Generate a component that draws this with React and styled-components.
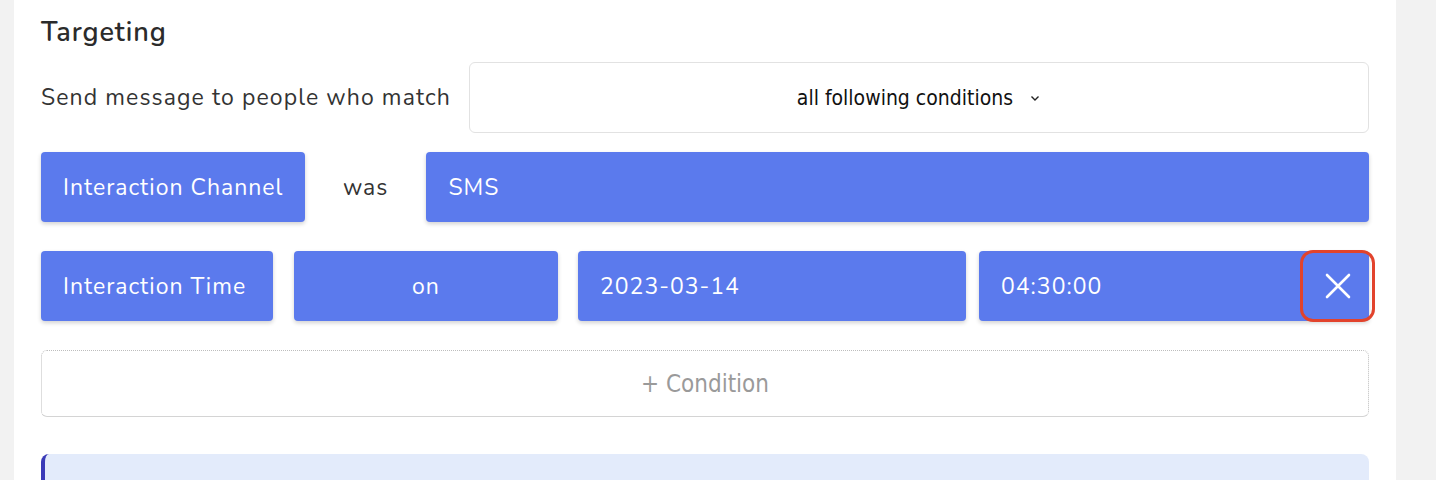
import React from "react";
import styled, { createGlobalStyle } from "styled-components";

const GlobalStyle = createGlobalStyle`
  html, body {
    margin: 0;
    padding: 0;
    background: #f2f2f2;
    font-family: "Nunito", "Noto Sans", "Open Sans", sans-serif;
  }
`;

const Page = styled.div`
  display: flex;
  height: 480px;
  overflow: hidden;
  padding-left: 14px;
  padding-right: 40px;
`;

const Panel = styled.div`
  flex: 1;
  background: #ffffff;
  padding: 15px 27px 0 27px;
  display: flex;
  flex-direction: column;

  & > * {
    flex-shrink: 0;
  }
`;

const Title = styled.h2`
  margin: 0 0 11px 0;
  font-size: 27px;
  font-weight: 600;
  letter-spacing: 0.9px;
  color: #2b2b2b;
  line-height: 36px;
`;

const MatchRow = styled.div`
  display: flex;
  align-items: center;
  gap: 18px;
  margin-bottom: 19px;
`;

const Label = styled.span`
  font-size: 23px;
  letter-spacing: 1.1px;
  color: #333333;
  white-space: nowrap;
`;

const Select = styled.div`
  flex: 1;
  height: 71px;
  border: 1px solid #e2e2e2;
  border-radius: 6px;
  box-sizing: border-box;
  display: flex;
  align-items: center;
  justify-content: center;
  gap: 16px;
  font-family: "DejaVu Sans Condensed", "DejaVu Sans", sans-serif;
  font-size: 21px;
  color: #111111;
`;

const Row = styled.div`
  display: flex;
  align-items: center;
  margin-bottom: 29px;
`;

const Chip = styled.div`
  height: 70px;
  box-sizing: border-box;
  background: #5b7aed;
  color: #ffffff;
  border-radius: 4px;
  box-shadow: 0 2px 4px rgba(0, 0, 0, 0.18);
  display: flex;
  align-items: center;
  justify-content: ${(p) => (p.$center ? "center" : "flex-start")};
  padding: ${(p) => (p.$center ? "0" : "0 0 0 22px")};
  font-size: 23px;
  letter-spacing: 1px;
  white-space: nowrap;
  width: ${(p) => (p.$w ? `${p.$w}px` : "auto")};
  flex: ${(p) => (p.$grow ? 1 : "none")};
  margin-right: ${(p) => p.$mr || 0}px;
  position: relative;
`;

const Word = styled.span`
  font-size: 23px;
  letter-spacing: 1px;
  color: #333333;
  margin: 0 38px;
`;

const RemoveButton = styled.button`
  position: absolute;
  right: -6px;
  top: -1px;
  width: 75px;
  height: 72px;
  box-sizing: border-box;
  border: 3px solid #e2432c;
  border-radius: 13px;
  background: transparent;
  display: flex;
  align-items: center;
  justify-content: center;
  padding: 0;
  cursor: pointer;
`;

const AddCondition = styled.button`
  height: 67px;
  box-sizing: border-box;
  border: 1px dotted #bdbdbd;
  border-bottom: 1.5px solid #d4d4d4;
  border-radius: 6px;
  background: #ffffff;
  font-family: "DejaVu Sans Condensed", "DejaVu Sans", sans-serif;
  font-weight: 300;
  font-size: 24px;
  color: #9a9a9a;
  margin-bottom: 37px;
  cursor: pointer;
`;

const Note = styled.div`
  height: 60px;
  background: #e3ebfb;
  border-left: 4px solid #3a3ab8;
  border-radius: 8px 8px 0 0;
`;

export default function App() {
  return (
    <>
      <GlobalStyle />
      <Page>
        <Panel>
          <Title>Targeting</Title>
          <MatchRow>
            <Label>Send message to people who match</Label>
            <Select>
              <span>all following conditions</span>
              <svg width="12" height="12" viewBox="0 0 12 12">
                <path d="M2.5 4.5 L6 8 L9.5 4.5" fill="none" stroke="#222" strokeWidth="1.4" />
              </svg>
            </Select>
          </MatchRow>
          <Row>
            <Chip $w={264}>Interaction Channel</Chip>
            <Word>was</Word>
            <Chip $grow>SMS</Chip>
          </Row>
          <Row>
            <Chip $w={232} $mr={21}>Interaction Time</Chip>
            <Chip $w={264} $mr={20} $center>on</Chip>
            <Chip $w={388} $mr={13}>2023-03-14</Chip>
            <Chip $grow>
              04:30:00
              <RemoveButton aria-label="remove">
                <svg width="26" height="26" viewBox="0 0 26 26">
                  <path d="M2 2 L24 24 M24 2 L2 24" stroke="#fff" strokeWidth="2.6" strokeLinecap="round" />
                </svg>
              </RemoveButton>
            </Chip>
          </Row>
          <AddCondition>+ Condition</AddCondition>
          <Note />
        </Panel>
      </Page>
    </>
  );
}
